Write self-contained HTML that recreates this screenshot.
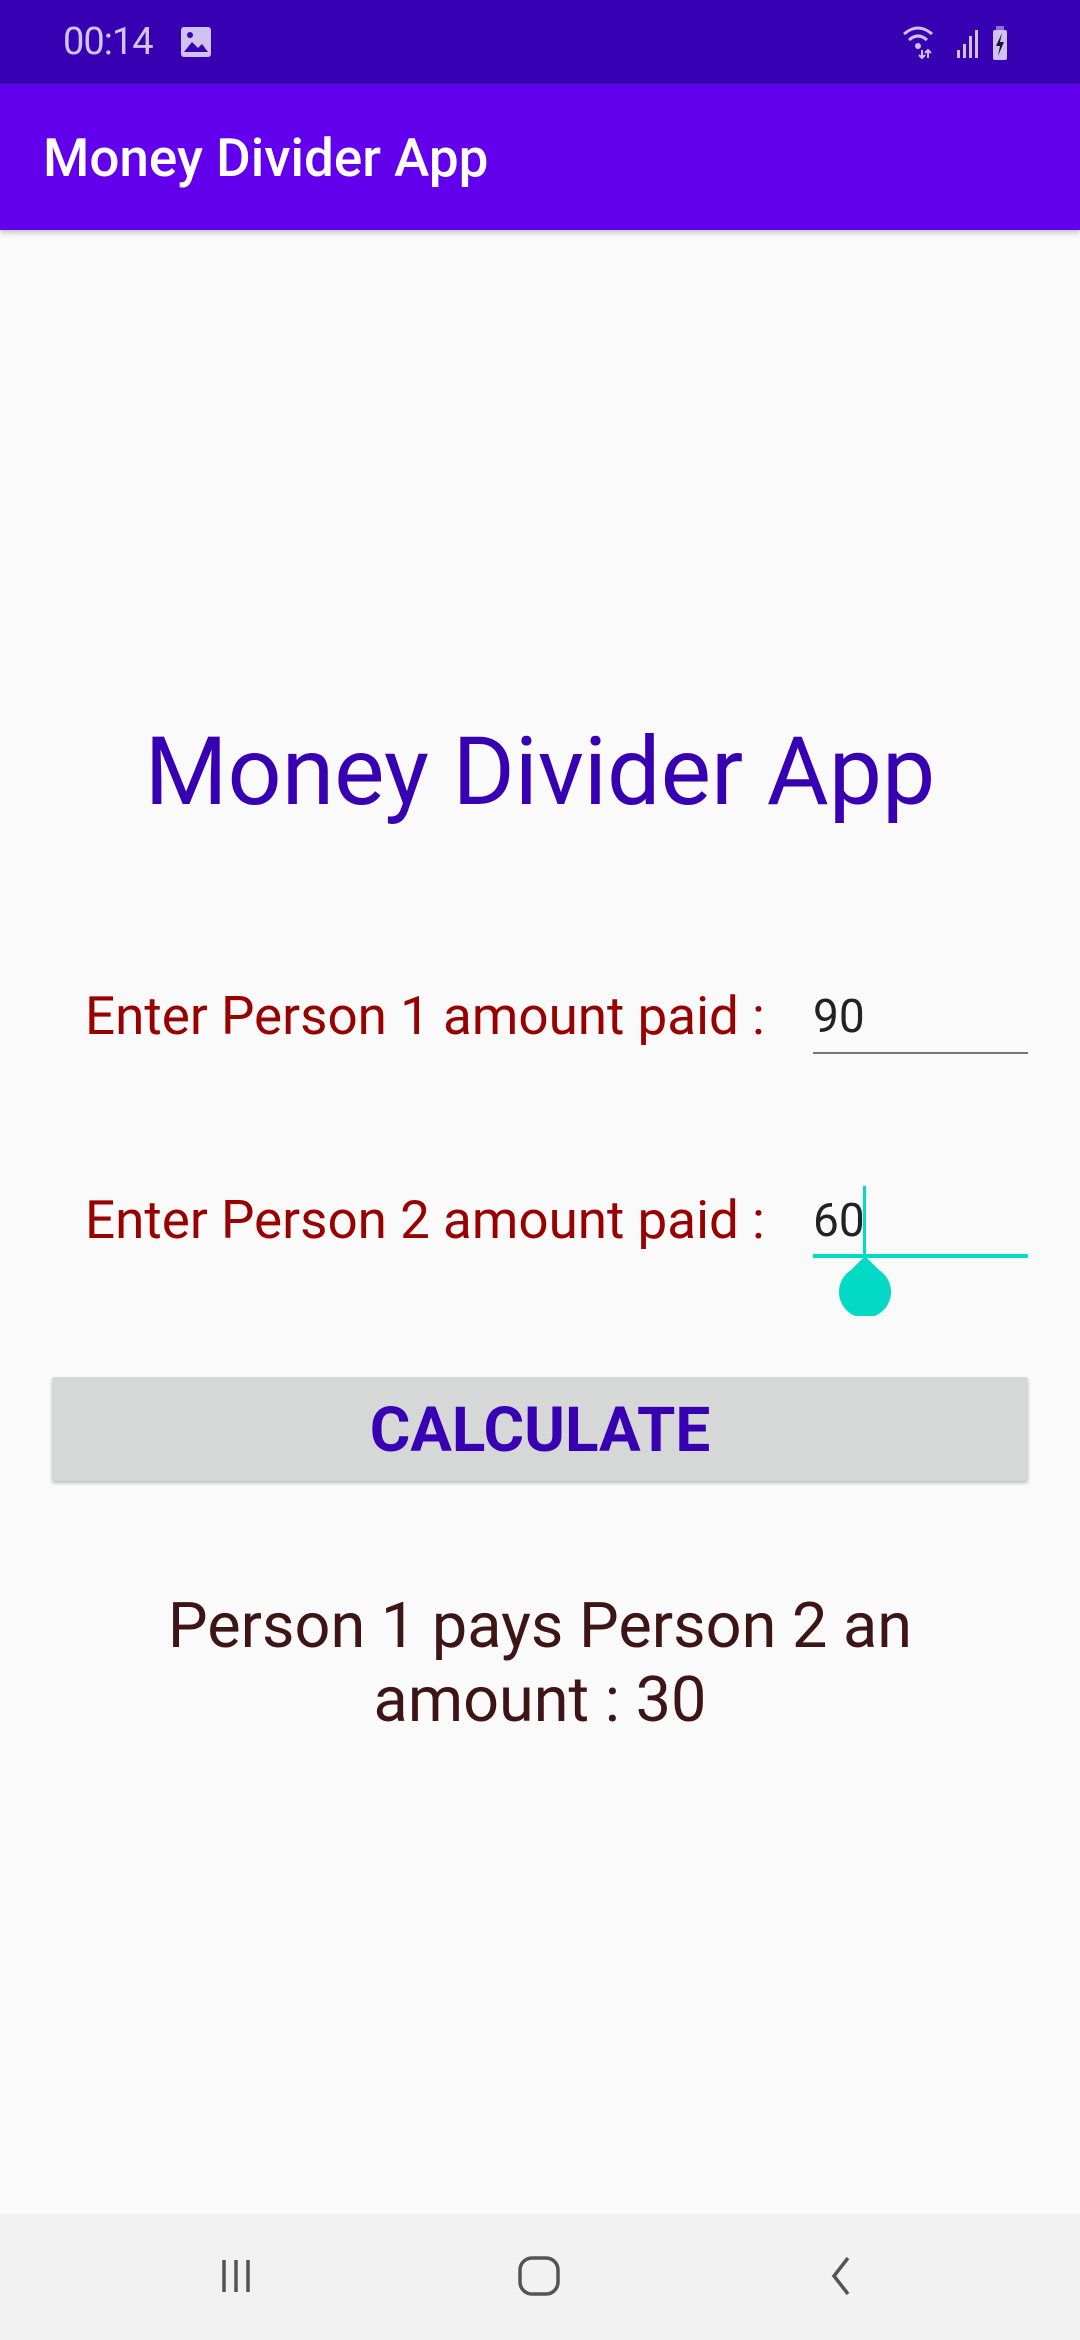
<!DOCTYPE html>
<html><head><meta charset="utf-8"><style>
html,body{margin:0;padding:0}
body{width:1080px;height:2340px;background:#FAFAFA;position:relative;overflow:hidden;font-family:"Roboto","Liberation Sans",sans-serif}
.abs{position:absolute}
</style></head><body>
<div class="abs" style="left:0;top:0;width:1080px;height:84px;background:#3700B3"></div>
<div class="abs" style="left:63px;top:20px;font-size:38px;color:#d0c4f0;letter-spacing:-1px">00:14</div>
<svg class="abs" style="left:180px;top:26px" width="32" height="32" viewBox="0 0 32 32"><rect x="1" y="1" width="30" height="30" rx="3" fill="#cfc2f0"/><path d="M4 26 L12 16 L18 22 L22 18 L28 26Z" fill="#3700B3"/><circle cx="10" cy="9" r="3" fill="#3700B3"/></svg>
<svg class="abs" style="left:900px;top:22px" width="120" height="40" viewBox="0 0 120 40">
<path d="M4 12 Q18 0 32 12" stroke="#cfc2f0" stroke-width="3" fill="none"/><path d="M9 18 Q18 10 27 18" stroke="#cfc2f0" stroke-width="3" fill="none"/><circle cx="18" cy="24" r="3" fill="#cfc2f0"/>
<path d="M22 28v8M19 33l3 3 3-3M28 36v-8M25 31l3-3 3 3" stroke="#cfc2f0" stroke-width="2" fill="none"/>
<rect x="57" y="28" width="3" height="8" fill="#cfc2f0"/><rect x="63" y="22" width="3" height="14" fill="#cfc2f0"/><rect x="69" y="14" width="3" height="22" fill="#cfc2f0"/><rect x="75" y="8" width="3" height="28" fill="#cfc2f0"/>
<rect x="96" y="4" width="8" height="4" fill="#8a6fd8"/><rect x="93" y="8" width="14" height="30" rx="2" fill="#cfc2f0"/><path d="M102 11 L96 24 L100 24 L98 34 L104 20 L100 20Z" fill="#1a1030"/></svg>
<div class="abs" style="left:0;top:84px;width:1080px;height:146px;background:#6200EE;box-shadow:0 3px 5px rgba(0,0,0,.2)"></div>
<div class="abs" style="left:43px;top:128px;font-size:53px;color:#fff;font-weight:500;line-height:60px">Money Divider App</div>

<div class="abs" style="left:0;top:718px;width:1080px;text-align:center;font-size:95px;color:#3700B3;line-height:110px">Money Divider App</div>

<div class="abs" style="left:85px;top:981px;font-size:53px;color:#990000;line-height:70px">Enter Person 1 amount paid :</div>
<div class="abs" style="left:813px;top:985px;font-size:46px;color:#222;line-height:64px">90</div>
<div class="abs" style="left:813px;top:1052px;width:215px;height:2px;background:#777"></div>

<div class="abs" style="left:85px;top:1185px;font-size:53px;color:#990000;line-height:70px">Enter Person 2 amount paid :</div>
<div class="abs" style="left:813px;top:1189px;font-size:46px;color:#222;line-height:64px">60</div>
<div class="abs" style="left:863px;top:1186px;width:3px;height:70px;background:#03DAC5"></div>
<div class="abs" style="left:813px;top:1254px;width:215px;height:4px;background:#03DAC5"></div>
<svg class="abs" style="left:838px;top:1246px" width="54" height="70" viewBox="0 0 54 70"><path d="M27 10 L13 24 A26 26 0 1 0 41 24 Z" fill="#03DAC5"/></svg>

<div class="abs" style="left:52px;top:1377px;width:976px;height:104px;background:#D6D7D7;border-radius:3px;box-shadow:0 2px 3px rgba(0,0,0,.25);text-align:center;line-height:108px;font-size:62px;font-weight:bold;color:#3700B3">CALCULATE</div>

<div class="abs" style="left:0;top:1590px;width:1080px;text-align:center;font-size:63px;color:#3E1515;line-height:74px">Person 1 pays Person 2 an<br>amount : 30</div>

<div class="abs" style="left:0;top:2214px;width:1080px;height:126px;background:#F2F2F2"></div>
<svg class="abs" style="left:216px;top:2256px" width="40" height="40" viewBox="0 0 40 40"><path d="M8 4v32M20 4v32M32 4v32" stroke="#555" stroke-width="3.5"/></svg>
<svg class="abs" style="left:516px;top:2254px" width="46" height="44" viewBox="0 0 46 44"><rect x="4" y="4" width="38" height="36" rx="12" stroke="#555" stroke-width="3.5" fill="none"/></svg>
<svg class="abs" style="left:826px;top:2254px" width="30" height="44" viewBox="0 0 30 44"><path d="M22 4 L8 22 L22 40" stroke="#555" stroke-width="3.5" fill="none"/></svg>
</body></html>
